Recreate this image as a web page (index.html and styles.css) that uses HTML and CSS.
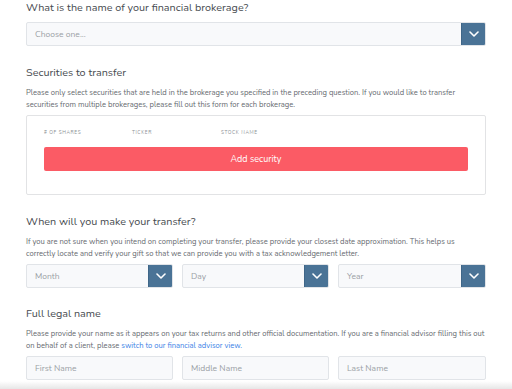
FILE: index.html
```html
<!DOCTYPE html>
<html>
<head>
<meta charset="utf-8">
<link rel="stylesheet" href="styles.css">
</head>
<body>
<div class="page">
  <h2 class="q q-first">What is the name of your financial brokerage?</h2>
  <div class="select select-wide">
    <span class="ph">Choose one...</span>
    <span class="arrow"><svg width="10" height="6" viewBox="0 0 10 6"><path d="M1 1l4 4 4-4" fill="none" stroke="#fff" stroke-width="1.6" stroke-linecap="round" stroke-linejoin="round"/></svg></span>
  </div>

  <h2 class="q">Securities to transfer</h2>
  <p class="help">Please only select securities that are held in the brokerage you specified in the preceding question. If you would like to transfer securities from multiple brokerages, please fill out this form for each brokerage.</p>
  <div class="card">
    <div class="cols">
      <span class="c1"># OF SHARES</span>
      <span class="c2">TICKER</span>
      <span class="c3">STOCK NAME</span>
    </div>
    <button class="add">Add security</button>
  </div>

  <h2 class="q">When will you make your transfer?</h2>
  <p class="help">If you are not sure when you intend on completing your transfer, please provide your closest date approximation. This helps us correctly locate and verify your gift so that we can provide you with a tax acknowledgement letter.</p>
  <div class="row3">
    <div class="select"><span class="ph">Month</span><span class="arrow"><svg width="10" height="6" viewBox="0 0 10 6"><path d="M1 1l4 4 4-4" fill="none" stroke="#fff" stroke-width="1.6" stroke-linecap="round" stroke-linejoin="round"/></svg></span></div>
    <div class="select"><span class="ph">Day</span><span class="arrow"><svg width="10" height="6" viewBox="0 0 10 6"><path d="M1 1l4 4 4-4" fill="none" stroke="#fff" stroke-width="1.6" stroke-linecap="round" stroke-linejoin="round"/></svg></span></div>
    <div class="select"><span class="ph">Year</span><span class="arrow"><svg width="10" height="6" viewBox="0 0 10 6"><path d="M1 1l4 4 4-4" fill="none" stroke="#fff" stroke-width="1.6" stroke-linecap="round" stroke-linejoin="round"/></svg></span></div>
  </div>

  <h2 class="q">Full legal name</h2>
  <p class="help">Please provide your name as it appears on your tax returns and other official documentation. If you are a financial advisor filling this out on behalf of a client, please <a href="#" class="link">switch to our financial advisor view.</a></p>
  <div class="row3">
    <div class="input"><span class="ph">First Name</span></div>
    <div class="input"><span class="ph">Middle Name</span></div>
    <div class="input"><span class="ph">Last Name</span></div>
  </div>
</div>
<div class="fade"></div>
</body>
</html>
```
FILE: styles.css
```css
* { box-sizing: border-box; }
html, body { margin: 0; padding: 0; background: #fff; }
body {
  font-family: "Nunito", "Lato", "Open Sans", sans-serif;
  color: #3f4347;
  width: 512px;
  height: 389px;
  overflow: hidden;
}
.page { padding: 0 26px 0 26px; }
.q {
  margin: 19px 0 0;
  font-size: 10.8px;
  line-height: 16px;
  font-weight: 400;
  color: #474b50;
}
.q-first { margin-top: 0; }
.help {
  margin: 6px 0 0;
  font-size: 7.6px;
  line-height: 12px;
  color: #666a6f;
}
.link { color: #3b7fe6; text-decoration: none; }
.select, .input {
  display: flex;
  height: 24px;
  border: 1px solid #e1e4e8;
  border-radius: 2px;
  background: #f8f9fb;
  align-items: stretch;
  overflow: hidden;
}
.select-wide { margin-top: 6px; }
.ph {
  flex: 1;
  display: flex;
  align-items: center;
  padding-left: 8px;
  font-size: 8.5px;
  color: #9a9fa5;
}
.arrow {
  width: 25px;
  background: #4a7396;
  border: 1px solid #3f6688;
  margin: -1px -1px -1px 0;
  display: flex;
  align-items: center;
  justify-content: center;
}
.card {
  margin-top: 4px;
  border: 1px solid #e2e3e5;
  border-radius: 2px;
  padding: 13px 17px 23px;
  height: 80px;
}
.cols {
  display: flex;
  height: 8px;
  font-size: 4.8px;
  line-height: 8px;
  letter-spacing: 0.6px;
  color: #8b8f94;
}
.c1 { width: 88px; }
.c2 { width: 89px; }
.add {
  display: block;
  width: 100%;
  margin-top: 10px;
  height: 24px;
  border: none;
  border-radius: 2px;
  background: #fb5b65;
  color: #fff;
  font-family: inherit;
  font-size: 9px;
  padding: 0;
}
.row3 {
  margin-top: 4px;
  display: grid;
  grid-template-columns: 147px 147px 148px;
  column-gap: 9px;
}
.row3 + .q { margin-top: 18px; }
.fade {
  position: fixed;
  left: 0; right: 0; bottom: 0;
  height: 8px;
  background: linear-gradient(to bottom, rgba(235,235,235,0), rgba(228,228,228,0.9));
  pointer-events: none;
}
```
